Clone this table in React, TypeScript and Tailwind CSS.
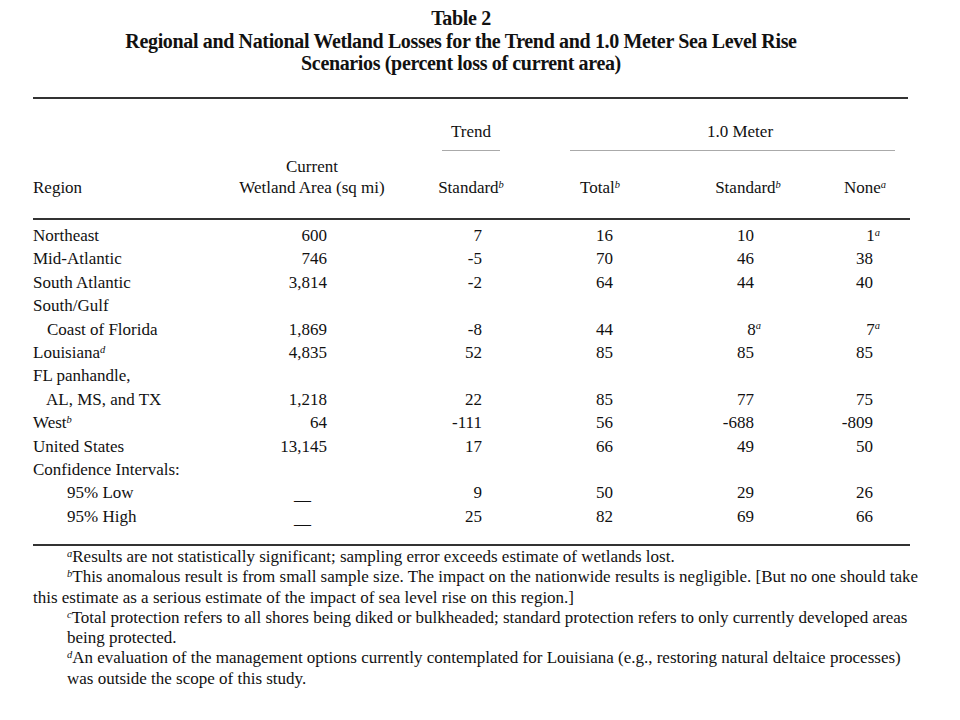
import React from 'react';

type Row = {
  region: string;
  sup?: string;
  indent?: string;
  area?: string;
  trend?: string;
  total?: string;
  std?: string;
  stdSup?: string;
  none?: string;
  noneSup?: string;
  dash?: boolean;
};

const rows: Row[] = [
  { region: 'Northeast', area: '600', trend: '7', total: '16', std: '10', none: '1', noneSup: 'a' },
  { region: 'Mid-Atlantic', area: '746', trend: '-5', total: '70', std: '46', none: '38' },
  { region: 'South Atlantic', area: '3,814', trend: '-2', total: '64', std: '44', none: '40' },
  { region: 'South/Gulf' },
  { region: 'Coast of Florida', indent: 'pl-[14px]', area: '1,869', trend: '-8', total: '44', std: '8', stdSup: 'a', none: '7', noneSup: 'a' },
  { region: 'Louisiana', sup: 'd', area: '4,835', trend: '52', total: '85', std: '85', none: '85' },
  { region: 'FL panhandle,' },
  { region: 'AL, MS, and TX', indent: 'pl-[13px]', area: '1,218', trend: '22', total: '85', std: '77', none: '75' },
  { region: 'West', sup: 'b', area: '64', trend: '-111', total: '56', std: '-688', none: '-809' },
  { region: 'United States', area: '13,145', trend: '17', total: '66', std: '49', none: '50' },
  { region: 'Confidence Intervals:' },
  { region: '95% Low', indent: 'pl-[34px]', dash: true, trend: '9', total: '50', std: '29', none: '26' },
  { region: '95% High', indent: 'pl-[34px]', dash: true, trend: '25', total: '82', std: '69', none: '66' },
];

const Sup = ({ c, hang }: { c: string; hang?: boolean }) => (
  <sup className={`italic text-[10.5px] ${hang ? '-mr-[7px]' : ''}`}>{c}</sup>
);

const Num = ({ v, sup }: { v?: string; sup?: string }) => (
  <div className="text-right whitespace-nowrap">
    {v}
    {sup && <Sup c={sup} hang />}
  </div>
);

export default function App() {
  return (
    <div className="w-[960px] h-[720px] bg-white text-[#111] font-['Liberation_Serif','Times_New_Roman',serif] overflow-hidden">
      {/* title */}
      <div className="h-[97px] pt-[7px] pr-[38px] text-center font-bold text-[20px] tracking-[-0.35px] leading-[22.5px]">
        <div>Table 2</div>
        <div>Regional and National Wetland Losses for the Trend and 1.0 Meter Sea Level Rise</div>
        <div>Scenarios (percent loss of current area)</div>
      </div>
      <div className="ml-[33px] w-[875px] h-[2px] bg-[#333]" />

      {/* column headers */}
      <div className="h-[119px] ml-[33px] flex items-end pb-[20px] text-[17px] leading-[21px] whitespace-nowrap">
        <div className="w-[200px]">Region</div>
        <div className="w-[158px] text-center">
          <div>Current</div>
          <div>Wetland Area (sq mi)</div>
        </div>
        <div className="w-[160px] flex flex-col items-center">
          <div>Trend</div>
          <div className="w-[58px] h-px bg-[#aaa] mt-[8px]" />
          <div className="mt-[26px]">
            Standard<Sup c="b" />
          </div>
        </div>
        <div className="w-[373px] flex flex-col">
          <div className="pl-[34px] w-[344px] text-center">1.0 Meter</div>
          <div className="ml-[19px] w-[325px] h-px bg-[#aaa] mt-[8px]" />
          <div className="flex mt-[26px]">
            <div className="w-[98px] text-center">
              Total<Sup c="b" />
            </div>
            <div className="w-[41px]" />
            <div className="w-[116px] text-center">
              Standard<Sup c="b" />
            </div>
            <div className="w-[118px] text-center">
              None<Sup c="a" />
            </div>
          </div>
        </div>
      </div>
      <div className="ml-[33px] w-[877px] h-[2px] bg-[#333]" />

      {/* rows */}
      <div className="pt-[4px] pb-[16px] ml-[33px] text-[17px] leading-[23.4px]">
        {rows.map((r, i) => (
          <div key={i} className="grid grid-cols-[200px_94px_155px_131px_141px_119px]">
            <div className={`whitespace-nowrap ${r.indent ?? ''}`}>
              {r.region}
              {r.sup && <Sup c={r.sup} />}
            </div>
            {r.dash ? (
              <div className="text-right pr-[16px]">
                <span className="inline-block translate-y-[7px]">—</span>
              </div>
            ) : (
              <Num v={r.area} />
            )}
            <Num v={r.trend} />
            <Num v={r.total} />
            <Num v={r.std} sup={r.stdSup} />
            <Num v={r.none} sup={r.noneSup} />
          </div>
        ))}
      </div>
      <div className="ml-[33px] w-[877px] h-[2px] bg-[#333]" />

      {/* footnotes */}
      <div className="pt-[1px] ml-[33px] text-[17px] leading-[20.2px] whitespace-nowrap">
        <div className="pl-[34px]">
          <Sup c="a" />
          Results are not statistically significant; sampling error exceeds estimate of wetlands lost.
        </div>
        <div className="indent-[34px]">
          <Sup c="b" />
          This anomalous result is from small sample size. The impact on the nationwide results is negligible. [But no one should take
          <br />
          this estimate as a serious estimate of the impact of sea level rise on this region.]
        </div>
        <div className="pl-[34px]">
          <Sup c="c" />
          Total protection refers to all shores being diked or bulkheaded; standard protection refers to only currently developed areas
          <br />
          being protected.
        </div>
        <div className="pl-[34px]">
          <Sup c="d" />
          An evaluation of the management options currently contemplated for Louisiana (e.g., restoring natural deltaice processes)
          <br />
          was outside the scope of this study.
        </div>
      </div>
    </div>
  );
}
